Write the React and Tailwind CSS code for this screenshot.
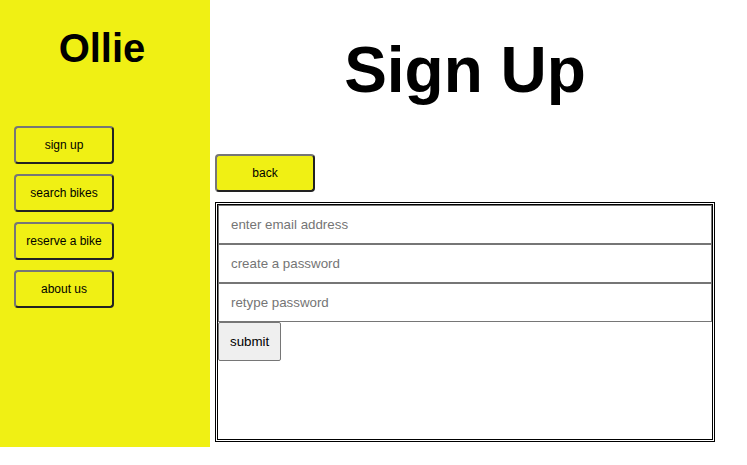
import React from 'react'

const NAV = ['sign up', 'search bikes', 'reserve a bike', 'about us']

const navBtn =
  'w-[100px] h-[38px] rounded-[4px] border-2 border-t-[#767676] border-l-[#767676] border-r-[#222222] border-b-[#222222] bg-[#f0f014] text-[12px] text-black flex items-center justify-center'

const Field = ({ placeholder, type = 'text' }) => (
  <input
    type={type}
    placeholder={placeholder}
    className="block w-full h-[39px] border border-[#767676] bg-white px-[12px] text-[13.33px] text-black placeholder:text-[#757575] outline-none"
  />
)

export default function App() {
  return (
    <div className="flex w-[747px] h-[465px] bg-white" style={{ fontFamily: '"Liberation Sans", Arial, sans-serif' }}>
      <aside className="w-[210px] h-[447px] shrink-0 bg-[#f0f014]">
        <h1 className="w-[204px] pt-[25px] text-center text-[40px] leading-[46px] font-bold text-black">Ollie</h1>
        <nav className="mt-[55px] ml-[14px] flex flex-col gap-[10px]">
          {NAV.map(label => (
            <button key={label} className={navBtn}>{label}</button>
          ))}
        </nav>
      </aside>

      <main className="ml-[5px] w-[500px]">
        <h1 className="pt-[33px] text-center text-[64px] leading-[74px] font-bold text-black">Sign Up</h1>
        <button className={`${navBtn} mt-[47px]`}>back</button>
        <form className="mt-[10px] h-[240px] border-[3px] border-double border-black">
          <Field placeholder="enter email address" type="email" />
          <Field placeholder="create a password" type="password" />
          <Field placeholder="retype password" type="password" />
          <button
            type="button"
            className="block h-[39px] px-[11px] rounded-[2px] border border-[#767676] bg-[#efefef] text-[13.33px] text-black"
          >
            submit
          </button>
        </form>
      </main>
    </div>
  )
}
